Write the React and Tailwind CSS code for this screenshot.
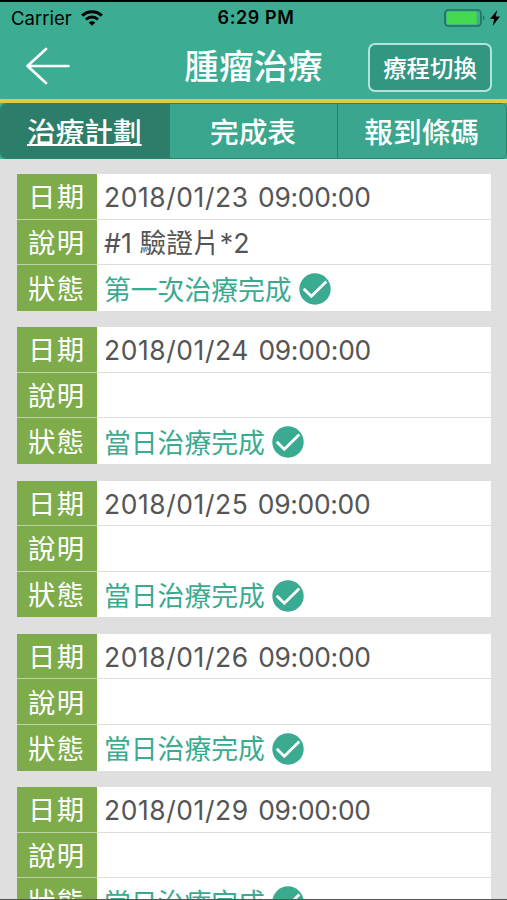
const TABS = [
  { label: '治療計劃', active: true },
  { label: '完成表', active: false },
  { label: '報到條碼', active: false },
]

const TREATMENTS = [
  { date: '2018/01/23', time: '09:00:00', note: '#1 驗證片*2', status: '第一次治療完成' },
  { date: '2018/01/24', time: '09:00:00', note: '', status: '當日治療完成' },
  { date: '2018/01/25', time: '09:00:00', note: '', status: '當日治療完成' },
  { date: '2018/01/26', time: '09:00:00', note: '', status: '當日治療完成' },
  { date: '2018/01/29', time: '09:00:00', note: '', status: '當日治療完成' },
]

function StatusBar() {
  return (
    <div className="grid h-[26px] grid-cols-3 items-center pr-[7px] pl-[11px] text-black">
      <div className="flex items-center gap-[9px]">
        <span className="text-[18.5px] leading-none">Carrier</span>
        <svg className="h-[16px] w-[22px]" viewBox="0 0 22 16" fill="none" stroke="currentColor" strokeWidth="3">
          <path d="M1.2 5.6C6.8.4 15.2.4 20.8 5.6" />
          <path d="M5 9.5c3.5-3.2 8.5-3.2 12 0" />
          <path d="M11 15.8 7.7 12.5c1.9-1.7 4.7-1.7 6.6 0z" fill="currentColor" stroke="none" />
        </svg>
      </div>
      <span className="pl-px text-center text-[18px] leading-none font-semibold tracking-[0.6px] whitespace-nowrap">6:29 PM</span>
      <div className="flex items-center justify-end gap-[5px]">
        <svg className="h-[18px] w-[41px]" viewBox="0 0 41 18">
          <rect x="1" y="1" width="36" height="16" rx="3.5" fill="none" stroke="#23705c" strokeWidth="1.7" />
          <rect x="2.8" y="2.8" width="30" height="12.4" rx="1.5" fill="#45d94f" />
          <path d="M39 6.5c2 .8 2 4.2 0 5z" fill="#23705c" />
        </svg>
        <svg className="h-[16px] w-[10px]" viewBox="0 0 10 16" fill="currentColor">
          <path d="M7.2 0 0 9h4.2L2.6 16 10 6.6H5.7z" />
        </svg>
      </div>
    </div>
  )
}

function CheckBadge() {
  return (
    <svg className="h-8 w-8 shrink-0" viewBox="0 0 32 32" fill="none">
      <circle cx="16" cy="16" r="15.7" fill="#3aaa90" />
      <path d="m4.7 15.8 7.6 7.5L27.3 8.6" stroke="#fff" strokeWidth="2.8" />
    </svg>
  )
}

function Row({ label, children, last }) {
  const line = last ? '' : 'border-b'
  return (
    <div className="flex h-[45.6px]">
      <div className={`flex w-[80.5px] shrink-0 items-center justify-center border-[#bdd4a2] bg-[#7eac4a] pt-[3px] text-[27.4px] tracking-[1.4px] text-white ${line}`}>
        {label}
      </div>
      <div className={`flex flex-1 items-center border-[#dedede] bg-white pt-[2px] pl-[7px] ${line}`}>{children}</div>
    </div>
  )
}

function TreatmentCard({ item }) {
  return (
    <section className="leading-none">
      <Row label="日期">
        <p className="flex gap-[9.5px] text-[26.4px] text-[#555]">
          <span className="tracking-[0.6px]">{item.date}</span>
          <span className="tracking-[-0.3px]">{item.time}</span>
        </p>
      </Row>
      <Row label="說明">
        <span className="pt-px text-[26.8px] text-[#555]">{item.note}</span>
      </Row>
      <Row label="狀態" last>
        <span className="pt-[2px] text-[26.8px] text-[#3aaa90]">{item.status}</span>
        <span className="ml-[7px]">
          <CheckBadge />
        </span>
      </Row>
    </section>
  )
}

export default function App() {
  return (
    <div className="flex h-[900px] w-[507px] flex-col overflow-hidden border-t-2 border-b border-t-black border-b-[#555] bg-[#dfdfdf] font-['Inter','Noto_Sans_CJK_TC',sans-serif]">
      <header className="h-[101px] shrink-0 border-b-4 border-[#d9d13c] bg-[#3cac92]">
        <div className="pt-[3px]">
          <StatusBar />
        </div>
        <div className="grid grid-cols-[1fr_auto_1fr] items-center pt-[12px] pr-[15px] pl-[26px] text-white">
          <svg className="mb-[3px] h-[38px] w-[44px]" viewBox="0 0 44 38" fill="none" stroke="currentColor" strokeWidth="2.6" strokeLinecap="round" strokeLinejoin="round">
            <path d="M20 2 1.5 19 20 36M1.5 19H42.5" />
          </svg>
          <h1 className="mr-[11px] pb-[2px] text-[34.6px] leading-none font-medium">腫瘤治療</h1>
          <button className="h-[49px] w-[124px] justify-self-end rounded-[7px] border-2 border-[#b5e3d8] bg-[#339680] pt-[3px] text-[23.4px] leading-none font-medium">
            療程切換
          </button>
        </div>
      </header>

      <nav className="h-[56px] shrink-0 bg-[#3cac92]">
        <div className="flex h-full overflow-hidden rounded-[6px] border border-[#2c806c]">
          {TABS.map((tab) => (
            <button
              key={tab.label}
              className={`flex-1 border-r border-[#2c806c] pt-[4px] pr-px text-[28.7px] leading-none font-medium text-white last:border-r-0 ${
                tab.active ? 'bg-[#2c7d69]' : 'bg-[#3aa68d]'
              }`}
            >
              {tab.active ? (
                <span className="underline decoration-2 underline-offset-1">{tab.label}</span>
              ) : (
                tab.label
              )}
            </button>
          ))}
        </div>
      </nav>

      <main className="flex flex-col gap-[16.5px] px-[16.5px] pt-[15px]">
        {TREATMENTS.map((item) => (
          <TreatmentCard key={item.date} item={item} />
        ))}
      </main>
    </div>
  )
}
